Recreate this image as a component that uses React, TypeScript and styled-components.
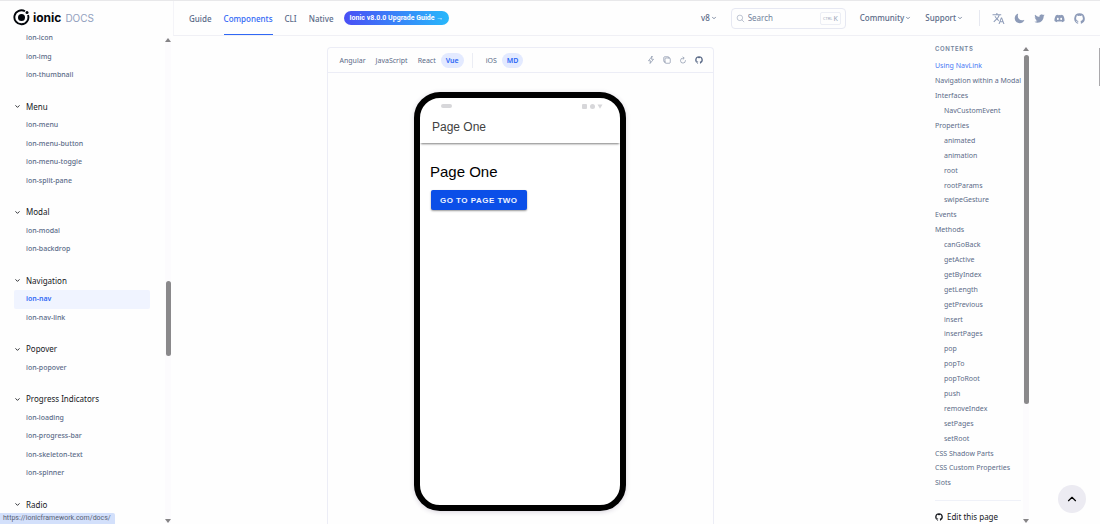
import React from "react";
import styled, { createGlobalStyle, css } from "styled-components";
import { IoFlashOutline, IoCopyOutline, IoRefreshOutline, IoMoon, IoLogoTwitter, IoSearchOutline } from "react-icons/io5";
import { MdTranslate } from "react-icons/md";
import { FaDiscord } from "react-icons/fa";
import { FiChevronDown, FiChevronUp } from "react-icons/fi";

const sans = `"Noto Sans", "Segoe UI", sans-serif`;
const slate = "#5b6b88";

const GlobalStyle = createGlobalStyle`
  * { box-sizing: border-box; }
  body { margin: 0; background: #fefefe; font-family: ${sans}; color: ${slate}; }
  a { color: inherit; text-decoration: none; }
  ul { list-style: none; margin: 0; padding: 0; }
  button { font: inherit; color: inherit; border: 0; background: none; padding: 0; }
  svg { display: block; }
`;

const Page = styled.div`
  position: relative;
  display: flex;
  height: 100vh;
  border-top: 1px solid #e8e8ea;
  overflow: hidden;
`;

const Sidebar = styled.aside`
  flex: 0 0 173px;
  display: flex;
  flex-direction: column;
`;

const Logo = styled.a`
  flex: 0 0 28px;
  display: flex;
  align-items: center;
  padding: 5px 0 0 13px;
  color: #03060b;
  font: 700 12px/16px "Inter", sans-serif;
`;

const LogoMark = styled.svg`
  width: 17px;
  height: 17px;
  margin-right: 3px;
`;

const LogoDocs = styled.span`
  margin-left: 4px;
  font-size: 10px;
  font-weight: 400;
  color: #92a0bd;
`;

const SideBody = styled.div`
  flex: 1;
  min-height: 0;
  display: flex;
`;

const SideNav = styled.nav`
  flex: 1;
  display: flex;
  flex-direction: column;
  padding: 0 15px 10px 14px;
`;

const Group = styled.section<{ $rows: number }>`
  flex: ${(p) => p.$rows} 1 0;
  min-height: 0;
  display: flex;
  flex-direction: column;
  & + & { margin-top: 13px; }
`;

const GroupTitle = styled.button`
  flex: 1 1 0;
  min-height: 0;
  display: flex;
  align-items: center;
  font-size: 8px;
  line-height: 12px;
  color: #16181d;
  svg { width: 7px; height: 7px; margin-right: 5px; stroke-width: 3; }
`;

const GroupList = styled.ul<{ $rows: number }>`
  flex: ${(p) => p.$rows} 1 0;
  min-height: 0;
  display: flex;
  flex-direction: column;
`;

const SideItem = styled.li`
  flex: 1 1 0;
  min-height: 0;
  display: flex;
`;

const SideLink = styled.a<{ $active?: boolean }>`
  flex: 1;
  display: flex;
  align-items: center;
  padding-left: 12px;
  border-radius: 2px;
  font-size: 7px;
  line-height: 12px;
  font-weight: 500;
  ${(p) => p.$active && css`
    background: #f0f4ff;
    color: #3068f5;
    font-weight: 600;
  `}
`;

const ScrollBar = styled.div`
  flex: 0 0 6px;
  display: flex;
  flex-direction: column;
  align-items: center;
  background: #fcfbfd;
`;

const Arrow = styled.span<{ $down?: boolean }>`
  border: 3px solid transparent;
  ${(p) => (p.$down ? "border-top: 4px solid #858486; border-bottom: 0;" : "border-bottom: 4px solid #858486; border-top: 0;")}
`;

const Track = styled.div`
  flex: 1;
  display: flex;
  flex-direction: column;
`;

const Space = styled.div<{ $grow: number }>`
  flex: ${(p) => p.$grow} 1 0;
`;

const Thumb = styled.div<{ $grow: number }>`
  flex: ${(p) => p.$grow} 1 0;
  width: 5px;
  border-radius: 3px;
  background: #8a898b;
`;

const SideScroll = styled(ScrollBar)`
  margin: 9px 2px 1px 0;
`;

const Main = styled.div`
  flex: 1;
  min-width: 0;
  display: flex;
  flex-direction: column;
`;

const Header = styled.header`
  flex: 0 0 35px;
  display: flex;
  align-items: center;
  padding: 0 15px;
  border-left: 1px solid #f4f4f8;
  border-bottom: 1px solid #f0f0f5;
  font-size: 8px;
  line-height: 12px;
  font-weight: 500;
`;

const HeaderNav = styled.nav`
  display: flex;
  align-self: stretch;
  gap: 12px;
  flex: 1;
`;

const NavLink = styled.a<{ $active?: boolean }>`
  display: flex;
  align-items: center;
  padding-top: 2px;
  border-bottom: 1px solid transparent;
  ${(p) => p.$active && css`
    color: #3068f5;
    border-color: #3068f5;
  `}
`;

const Pill = styled.a`
  align-self: center;
  margin-left: -2px;
  padding: 1px 6px;
  border-radius: 7px;
  background: linear-gradient(90deg, #4a4ff5, #27b8fb);
  color: #fff;
  font-family: Roboto, sans-serif;
  font-size: 7px;
  font-weight: 700;
`;

const Menu = styled.button`
  display: flex;
  align-items: center;
  gap: 1px;
  margin-right: 14px;
  svg { width: 6px; height: 6px; stroke-width: 3; }
`;

const Search = styled.label`
  display: flex;
  align-items: center;
  width: 115px;
  height: 21px;
  margin-right: 14px;
  padding: 0 4px;
  border: 1px solid #e6e8f2;
  border-radius: 4px;
  svg { width: 9px; height: 9px; color: #8d9ab0; }
`;

const SearchInput = styled.input`
  flex: 1;
  min-width: 0;
  margin-left: 3px;
  padding: 0;
  border: 0;
  outline: 0;
  background: none;
  font: 400 8px/12px ${sans};
  &::placeholder { color: #73839c; opacity: 1; }
`;

const Keys = styled.kbd`
  display: flex;
  align-items: center;
  gap: 1px;
  height: 13px;
  padding: 0 2px;
  border: 1px solid #eceef5;
  border-radius: 2px;
  font: 400 7px/11px ${sans};
  color: #98a4b7;
`;

const KeyCtrl = styled.span`
  font-size: 4px;
`;

const HeaderIcons = styled.div`
  display: flex;
  align-items: center;
  gap: 9px;
  padding-left: 12px;
  margin-left: 2px;
  border-left: 1px solid #e6e8f0;
  height: 16px;
  color: #8d9bb8;
  svg { width: 11px; height: 11px; }
  a:first-child svg { width: 13px; height: 13px; }
`;

const Columns = styled.div`
  flex: 1;
  min-height: 0;
  display: flex;
`;

const Content = styled.main`
  flex: 1;
  min-width: 0;
  display: flex;
  justify-content: center;
  padding: 11px 16px 0;
`;

const Playground = styled.section`
  flex: 0 1 387px;
  min-width: 0;
  border: 1px solid #ecedf6;
  border-bottom: 0;
  border-radius: 4px 4px 0 0;
`;

const Toolbar = styled.div`
  display: flex;
  align-items: center;
  height: 25px;
  padding: 0 10px 0 7px;
  border-bottom: 1px solid #ecedf6;
`;

const Tab = styled.button<{ $active?: boolean }>`
  height: 15px;
  padding: 0 5px;
  border-radius: 8px;
  font-size: 7px;
  line-height: 15px;
  ${(p) => p.$active && css`
    background: #e3eaff;
    color: #2a66f6;
    font-weight: 600;
  `}
`;

const TabDivider = styled.span`
  width: 1px;
  height: 15px;
  margin: 0 8px;
  background: #ebedf4;
`;

const Tools = styled.div`
  display: flex;
  gap: 8px;
  margin-left: auto;
  svg { width: 8px; height: 8px; }
`;

const Phone = styled.div`
  width: 212px;
  height: 419px;
  margin: 19px auto 0;
  border: 6px solid #000;
  border-radius: 26px;
  overflow: hidden;
  background: #fff;
  box-shadow: 0 1px 5px rgba(60, 40, 90, 0.2);
  font-family: "Liberation Sans", Arial, sans-serif;
`;

const StatusBar = styled.div`
  display: flex;
  align-items: center;
  gap: 3px;
  height: 16px;
  padding: 0 17px 0 21px;
  color: #d7d7da;
`;

const Speaker = styled.span`
  width: 11px;
  height: 4px;
  margin-right: auto;
  border-radius: 2px;
  background: currentColor;
`;

const StatusIcons = styled.svg`
  width: 21px;
  height: 5px;
`;

const AppBar = styled.div`
  height: 29px;
  padding: 5px 12px;
  box-shadow: 0 2px 2px -1px rgba(0, 0, 0, 0.5);
  font-size: 12px;
  line-height: 16px;
  color: #424242;
`;

const AppBody = styled.div`
  padding: 19px 10px;
  color: #000;
`;

const AppTitle = styled.h1`
  margin: 0 0 8px;
  font-size: 15px;
  line-height: 20px;
  font-weight: 400;
`;

const AppButton = styled.button`
  display: block;
  height: 20px;
  margin-left: 1px;
  padding: 0 9px;
  border-radius: 2px;
  background: #0b4fe8;
  color: #eef3ff;
  box-shadow: 0 1px 2px rgba(0, 0, 0, 0.4);
  font-size: 8px;
  font-weight: 700;
  letter-spacing: 0.06em;
`;

const Toc = styled.aside`
  flex: 0 0 233px;
  display: flex;
  padding: 9px 71px 0 68px;
`;

const TocBody = styled.div`
  flex: 1;
  min-width: 0;
  display: flex;
  flex-direction: column;
`;

const TocTitle = styled.h2`
  margin: 0 0 7px;
  font: 600 6px/7px "Inter", sans-serif;
  letter-spacing: 0.1em;
  color: #73839c;
`;

const TocList = styled.ul`
  flex: 1;
  min-height: 0;
  display: flex;
  flex-direction: column;
`;

const TocItem = styled.li<{ $nested?: boolean; $active?: boolean }>`
  flex: 1 1 0;
  min-height: 0;
  display: flex;
  align-items: center;
  padding-left: ${(p) => (p.$nested ? 9 : 0)}px;
  font-size: 7px;
  line-height: 12px;
  white-space: nowrap;
  ${(p) => p.$active && "color: #4a7bf5;"}
`;

const EditLink = styled.a`
  display: flex;
  align-items: center;
  gap: 4px;
  margin: 9px 2px 0 0;
  padding: 10px 0 1px;
  border-top: 1px solid #eff1f8;
  font-size: 8px;
  line-height: 12px;
  color: #16181d;
  svg { width: 8px; height: 8px; }
`;

const TocScroll = styled(ScrollBar)`
  margin: 2px 0 1px;
`;

const UpButton = styled.button`
  position: absolute;
  right: 14px;
  bottom: 11px;
  display: grid;
  place-items: center;
  width: 28px;
  height: 28px;
  border-radius: 50%;
  background: #ecebf2;
  color: #000;
  svg { width: 14px; height: 14px; }
`;

const StatusHint = styled.div`
  position: absolute;
  left: 0;
  bottom: 0;
  padding: 0 4px 0 3px;
  border-radius: 0 2px 0 0;
  background: #d3e0fb;
  font-family: Roboto, sans-serif;
  font-size: 7px;
  line-height: 11px;
  color: #596273;
`;

const PageThumb = styled.div`
  position: absolute;
  right: 0;
  top: 47px;
  width: 1px;
  height: 38px;
  background: #aaa9ac;
`;

const GitHub = () => (
  <svg viewBox="0 0 24 24" fill="currentColor" aria-hidden="true">
    <path d="M12 .8a11.5 11.5 0 0 0-3.6 22.400c.6.1.8-.3.8-.6v-2.100c-3.300.7-4-1.400-4-1.400-.5-1.400-1.300-1.700-1.300-1.700-1-.7.1-.7.1-.7 1.200.1 1.800 1.200 1.800 1.200 1 1.800 2.700 1.300 3.400 1 .1-.8.4-1.300.7-1.600-2.600-.3-5.300-1.300-5.300-5.800 0-1.300.4-2.300 1.200-3.100-.1-.3-.5-1.500.1-3.100 0 0 1-.3 3.200 1.200a11 11 0 0 1 5.800 0c2.200-1.500 3.200-1.200 3.200-1.200.6 1.600.2 2.800.1 3.100.7.8 1.200 1.900 1.200 3.100 0 4.500-2.700 5.500-5.300 5.800.4.4.8 1.100.8 2.200v3.100c0 .3.200.7.8.6A11.500 11.500 0 0 0 12 .8z" />
  </svg>
);

const groups: { title?: string; items: string[] }[] = [
  { items: ["ion-icon", "ion-img", "ion-thumbnail"] },
  { title: "Menu", items: ["ion-menu", "ion-menu-button", "ion-menu-toggle", "ion-split-pane"] },
  { title: "Modal", items: ["ion-modal", "ion-backdrop"] },
  { title: "Navigation", items: ["ion-nav", "ion-nav-link"] },
  { title: "Popover", items: ["ion-popover"] },
  { title: "Progress Indicators", items: ["ion-loading", "ion-progress-bar", "ion-skeleton-text", "ion-spinner"] },
  { title: "Radio", items: [] },
];

const toc: { label: string; children?: string[] }[] = [
  { label: "Using NavLink" },
  { label: "Navigation within a Modal" },
  { label: "Interfaces", children: ["NavCustomEvent"] },
  { label: "Properties", children: ["animated", "animation", "root", "rootParams", "swipeGesture"] },
  { label: "Events" },
  {
    label: "Methods",
    children: ["canGoBack", "getActive", "getByIndex", "getLength", "getPrevious", "insert", "insertPages", "pop", "popTo", "popToRoot", "push", "removeIndex", "setPages", "setRoot"],
  },
  { label: "CSS Shadow Parts" },
  { label: "CSS Custom Properties" },
  { label: "Slots" },
];

export default function App() {
  return (
    <>
      <GlobalStyle />
      <Page>
        <Sidebar>
          <Logo href="#">
            <LogoMark viewBox="0 0 34 34" aria-hidden="true">
              <path d="M24 4.600A14 14 0 1 0 30 12" fill="none" stroke="currentColor" strokeWidth="3.800" />
              <circle cx="17" cy="17" r="7" fill="currentColor" />
              <circle cx="28" cy="7" r="3" fill="currentColor" />
            </LogoMark>
            ionic <LogoDocs>DOCS</LogoDocs>
          </Logo>
          <SideBody>
            <SideNav>
              {groups.map((g, i) => (
                <Group key={i} $rows={g.items.length + (g.title ? 1 : 0)}>
                  {g.title && (
                    <GroupTitle>
                      <FiChevronDown />
                      {g.title}
                    </GroupTitle>
                  )}
                  {g.items.length > 0 && (
                    <GroupList $rows={g.items.length}>
                      {g.items.map((item) => (
                        <SideItem key={item}>
                          <SideLink href="#" $active={item === "ion-nav"}>{item}</SideLink>
                        </SideItem>
                      ))}
                    </GroupList>
                  )}
                </Group>
              ))}
            </SideNav>
            <SideScroll>
              <Arrow />
              <Track>
                <Space $grow={238} />
                <Thumb $grow={75} />
                <Space $grow={162} />
              </Track>
              <Arrow $down />
            </SideScroll>
          </SideBody>
        </Sidebar>

        <Main>
          <Header>
            <HeaderNav>
              <NavLink href="#">Guide</NavLink>
              <NavLink href="#" $active>Components</NavLink>
              <NavLink href="#">CLI</NavLink>
              <NavLink href="#">Native</NavLink>
              <Pill href="#">Ionic v8.0.0 Upgrade Guide →</Pill>
            </HeaderNav>
            <Menu>v8 <FiChevronDown /></Menu>
            <Search>
              <IoSearchOutline />
              <SearchInput placeholder="Search" aria-label="Search" />
              <Keys><KeyCtrl>CTRL</KeyCtrl>K</Keys>
            </Search>
            <Menu>Community <FiChevronDown /></Menu>
            <Menu>Support <FiChevronDown /></Menu>
            <HeaderIcons>
              <a href="#" aria-label="Translate"><MdTranslate /></a>
              <button aria-label="Dark mode"><IoMoon /></button>
              <a href="#" aria-label="Twitter"><IoLogoTwitter /></a>
              <a href="#" aria-label="Discord"><FaDiscord /></a>
              <a href="#" aria-label="GitHub"><GitHub /></a>
            </HeaderIcons>
          </Header>

          <Columns>
            <Content>
              <Playground>
                <Toolbar>
                  <Tab>Angular</Tab>
                  <Tab>JavaScript</Tab>
                  <Tab>React</Tab>
                  <Tab $active>Vue</Tab>
                  <TabDivider />
                  <Tab>iOS</Tab>
                  <Tab $active>MD</Tab>
                  <Tools>
                    <button aria-label="Open in StackBlitz"><IoFlashOutline /></button>
                    <button aria-label="Copy"><IoCopyOutline /></button>
                    <button aria-label="Reset"><IoRefreshOutline /></button>
                    <button aria-label="Report an issue"><GitHub /></button>
                  </Tools>
                </Toolbar>
                <Phone>
                  <StatusBar>
                    <Speaker />
                    <StatusIcons viewBox="0 0 21 5" fill="currentColor" aria-hidden="true">
                      <rect width="5" height="5" rx="1" />
                      <circle cx="10.500" cy="2.500" r="2.500" />
                      <path d="M15.500 0.500h5L18 4.800z" />
                    </StatusIcons>
                  </StatusBar>
                  <AppBar>Page One</AppBar>
                  <AppBody>
                    <AppTitle>Page One</AppTitle>
                    <AppButton>GO TO PAGE TWO</AppButton>
                  </AppBody>
                </Phone>
              </Playground>
            </Content>

            <Toc>
              <TocBody>
                <TocTitle>CONTENTS</TocTitle>
                <TocList>
                  {toc.map((entry, i) => (
                    <React.Fragment key={entry.label}>
                      <TocItem $active={i === 0}><a href="#">{entry.label}</a></TocItem>
                      {entry.children?.map((child) => (
                        <TocItem key={child} $nested><a href="#">{child}</a></TocItem>
                      ))}
                    </React.Fragment>
                  ))}
                </TocList>
                <EditLink href="#"><GitHub />Edit this page</EditLink>
              </TocBody>
              <TocScroll>
                <Arrow />
                <Track>
                  <Space $grow={4} />
                  <Thumb $grow={349} />
                  <Space $grow={115} />
                </Track>
                <Arrow $down />
              </TocScroll>
            </Toc>
          </Columns>
        </Main>

        <UpButton aria-label="Back to top"><FiChevronUp /></UpButton>
        <StatusHint>https://ionicframework.com/docs/</StatusHint>
        <PageThumb />
      </Page>
    </>
  );
}
